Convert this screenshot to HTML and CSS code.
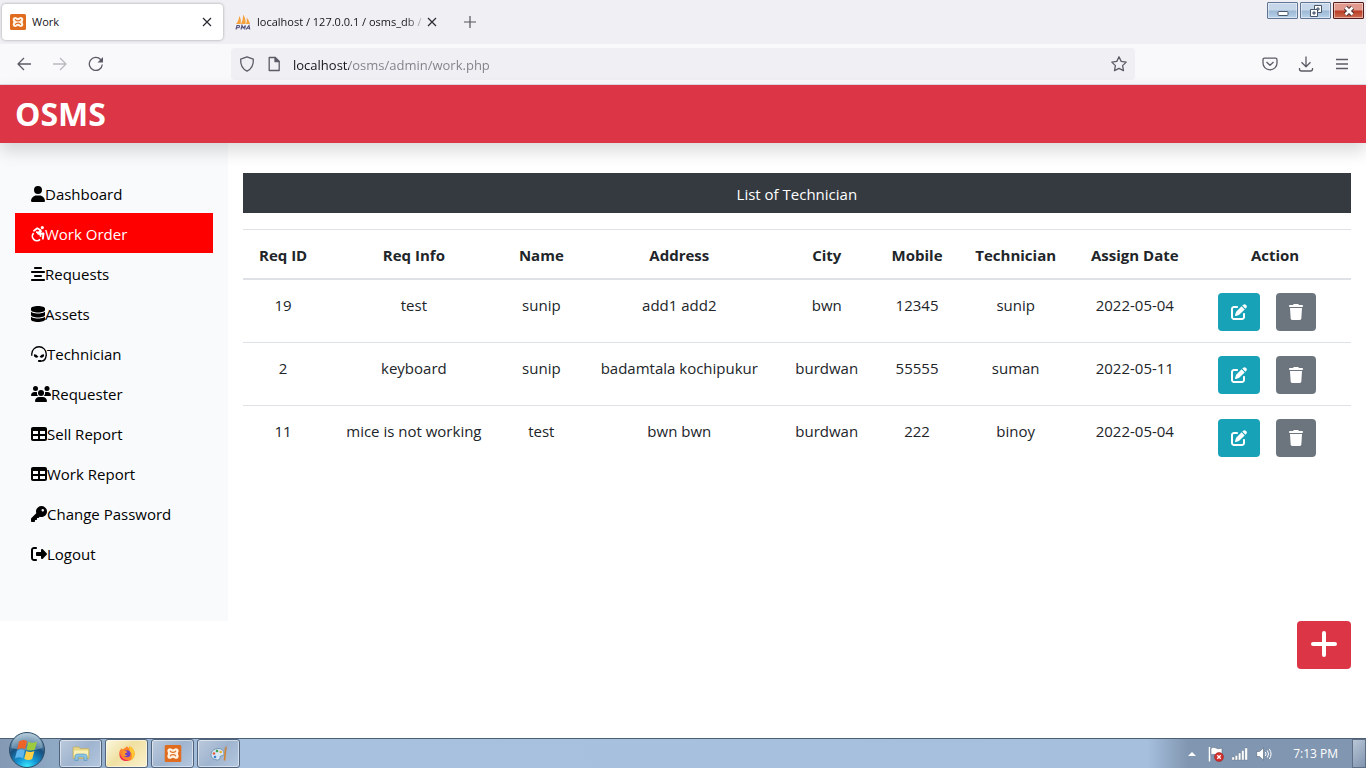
FILE: index.html
```html
<!DOCTYPE html>
<html lang="en">
<head>
<meta charset="utf-8">
<meta name="viewport" content="width=device-width, initial-scale=1">
<title>Work</title>
<link rel="stylesheet" href="styles.css">
</head>
<body>
<svg class="defs" width="0" height="0" aria-hidden="true">
  <defs>
    <symbol id="i-edit" viewBox="0 0 512 512"><path d="M471.6 21.7c-21.900-21.900-57.300-21.900-79.200 0L362.300 51.700l97.900 97.900 30.100-30.100c21.900-21.900 21.900-57.300 0-79.200L471.600 21.700zm-299.200 220c-6.100 6.100-10.800 13.600-13.500 21.900l-29.600 88.800c-2.900 8.600-.6 18.100 5.800 24.600s15.900 8.700 24.600 5.800l88.800-29.600c8.200-2.700 15.700-7.400 21.900-13.500L437.700 172.300 339.700 74.300 172.400 241.700zM96 64C43 64 0 107 0 160V416c0 53 43 96 96 96H352c53 0 96-43 96-96V320c0-17.700-14.300-32-32-32s-32 14.300-32 32v96c0 17.700-14.300 32-32 32H96c-17.700 0-32-14.300-32-32V160c0-17.700 14.300-32 32-32h96c17.700 0 32-14.300 32-32s-14.300-32-32-32H96z"/></symbol>
    <symbol id="i-trash" viewBox="0 0 448 512"><path d="M135.200 17.700L128 32H32C14.300 32 0 46.300 0 64S14.300 96 32 96H416c17.700 0 32-14.300 32-32s-14.300-32-32-32H320l-7.200-14.300C307.400 6.800 296.300 0 284.200 0H163.800c-12.100 0-23.200 6.800-28.600 17.700zM416 128H32L53.200 467c1.600 25.300 22.600 45 47.900 45H346.900c25.300 0 46.300-19.700 47.900-45L416 128z"/></symbol>
    <symbol id="i-table" viewBox="0 0 512 512"><path d="M64 256V160H224v96H64zm0 64H224v96H64V320zm224 96V320H448v96H288zM448 256H288V160H448v96zM64 32C28.700 32 0 60.700 0 96V416c0 35.300 28.700 64 64 64H448c35.300 0 64-28.700 64-64V96c0-35.300-28.700-64-64-64H64z"/></symbol>
    <symbol id="i-xampp" viewBox="0 0 16 16"><rect width="16" height="16" rx="1.500" fill="#e06c1f"/><path d="M5.300 3c1.200 0 1.400 1 2.700 1s1.500-1 2.700-1c1.600 0 2.600 1 2.600 2.500 0 1.100-.6 1.500-.6 2.500s.6 1.400.6 2.500c0 1.500-1 2.500-2.600 2.500-1.200 0-1.400-1-2.700-1s-1.500 1-2.700 1c-1.600 0-2.600-1-2.600-2.500 0-1.100.6-1.500.6-2.500s-.6-1.400-.6-2.500C2.700 4 3.700 3 5.300 3z" fill="#fff3e4"/><path d="M5.500 5.700c.3 1.200 1.300 1.200 2.500 1.200s2.200 0 2.500-1.200M5.500 10.300C5.800 9.100 6.800 9.100 8 9.100s2.200 0 2.500 1.200" fill="none" stroke="#e06c1f" stroke-width="1.200" stroke-linecap="round"/></symbol>
    <symbol id="i-close" viewBox="0 0 10 10"><path d="M1 1l8 8M9 1L1 9" fill="none" stroke="#2b2a33" stroke-width="1.200"/></symbol>
  </defs>
</svg>

<div class="browser">
  <div class="tabstrip">
    <div class="tab tab-active">
      <svg class="favicon" viewBox="0 0 16 16"><use href="#i-xampp"/></svg>
      <span class="tab-title">Work</span>
      <button class="tab-close" aria-label="Close tab"><svg width="10" height="10"><use href="#i-close"/></svg></button>
    </div>
    <div class="tab">
      <svg class="favicon" viewBox="0 0 16 16"><path d="M1 10C3 8 4 5 4.200 2c1.600 2 2 5 1.500 8zM6 10c1.600-3 2.200-6 2-9.500 2.200 3 2.800 6 2.600 9.500zM11 10c.8-2 1-4 .6-6.500 1.800 2 2.600 4 3.400 6.500z" fill="#f5a03a"/><path d="M1 15.500l1-4h1.600q1.200.1.900 1.200t-1.500 1.100H1.500M6 15.500l1-4 1.200 2.600 2.200-2.600-.8 4M11 15.500l3-4 .8 4M12 14.300h2.600" fill="none" stroke="#50507c" stroke-width="1.100"/></svg>
      <span class="tab-title tab-fade">localhost / 127.0.0.1 / osms_db /</span>
      <button class="tab-close" aria-label="Close tab"><svg width="10" height="10"><use href="#i-close"/></svg></button>
    </div>
    <button class="newtab" aria-label="New tab"><svg width="12" height="12" viewBox="0 0 12 12"><path d="M6 0v12M0 6h12" stroke="#55545d" stroke-width="1.200"/></svg></button>
    <div class="winbtns">
      <button class="winbtn" aria-label="Minimize"><svg width="16" height="14" viewBox="0 0 16 14"><rect x="3" y="7.500" width="10" height="4" rx="1" fill="#fff" stroke="#48566b"/></svg></button>
      <button class="winbtn" aria-label="Restore"><svg width="16" height="14" viewBox="0 0 16 14"><path d="M6.500 1.500h7v7h-7zM9 4h2v2H9z" fill="#fff" fill-rule="evenodd" stroke="#48566b"/><path d="M2.500 5.500h7v7h-7zM5 8h2v2H5z" fill="#fff" fill-rule="evenodd" stroke="#48566b"/></svg></button>
      <button class="winbtn winbtn-close" aria-label="Close"><svg width="16" height="14" viewBox="0 0 16 14"><path d="M4.500 3.500l7 7M11.500 3.500l-7 7" stroke="#4c3434" stroke-width="4.600"/><path d="M4.500 3.500l7 7M11.500 3.500l-7 7" stroke="#fff" stroke-width="2.600"/></svg></button>
    </div>
  </div>

  <div class="toolbar">
    <div class="tools-left">
      <button class="tool" aria-label="Back"><svg viewBox="0 0 16 16"><path d="M15 8H2M8 2L2 8l6 6"/></svg></button>
      <button class="tool tool-off" aria-label="Forward" disabled><svg viewBox="0 0 16 16"><path d="M1 8h13M8 2l6 6-6 6"/></svg></button>
      <button class="tool" aria-label="Reload"><svg viewBox="0 0 16 16"><path d="M14.300 8.500A6.500 6.500 0 1 1 12.600 3.500l1.500 1.500"/><path d="M15 1v5.500H9.500z" fill="#5b5b66" stroke="none"/></svg></button>
    </div>
    <div class="urlbar">
      <svg class="url-icon" viewBox="0 0 16 16"><path d="M8 .8l6.300 2.300c.4 5.200-1.500 9.600-6.300 12.100C3.200 12.700 1.300 8.300 1.700 3.100z"/></svg>
      <svg class="url-icon" viewBox="0 0 16 16"><path d="M3.200 1.500h6l4 4v9h-10z"/><path d="M9 1.500v4h4z" fill="#5b5b66"/></svg>
      <input class="url" type="text" aria-label="Address" value="localhost/osms/admin/work.php">
      <button class="tool" aria-label="Bookmark"><svg viewBox="0 0 16 16"><path d="M8 .8l2.200 4.600 5 .7-3.600 3.500.9 5L8 12.300l-4.500 2.300.9-5L.8 6.100l5-.7z"/></svg></button>
    </div>
    <div class="tools-right">
      <button class="tool" aria-label="Save to Pocket"><svg viewBox="0 0 16 16"><path d="M2.500 2.200h11q1.500 0 1.500 1.500v3.600a7 6.500 0 0 1-14 0V3.700q0-1.500 1.500-1.500zM4.500 6L8 9.300 11.500 6"/></svg></button>
      <button class="tool" aria-label="Downloads"><svg viewBox="0 0 16 16"><path d="M8 .5v10M3.500 6.300L8 10.800l4.500-4.500M1.500 12v1q0 2 2 2h9q2 0 2-2v-1"/></svg></button>
      <button class="tool" aria-label="Menu"><svg viewBox="0 0 16 16"><path d="M2 3.500h12M2 8h12M2 12.500h12"/></svg></button>
    </div>
  </div>
</div>

<div class="page">
  <header class="navbar"><a class="brand" href="#">OSMS</a></header>

  <div class="columns">
    <nav class="sidebar">
      <a class="nav-link" href="#"><svg class="fa" viewBox="0 0 448 512"><path d="M224 256A128 128 0 1 0 224 0a128 128 0 1 0 0 256zm-45.700 48C79.800 304 0 383.800 0 482.300C0 498.700 13.300 512 29.700 512H418.300c16.400 0 29.700-13.300 29.700-29.700C448 383.800 368.200 304 269.700 304H178.300z"/></svg>Dashboard</a>
      <a class="nav-link active" href="#"><svg class="fa" viewBox="0 0 448 512"><circle cx="362" cy="50" r="50"/><path d="M95 150l105-80 110 65-85 110" fill="none" stroke="currentColor" stroke-width="58" stroke-linejoin="round" stroke-linecap="round"/><path d="M290 125l65 45-80 95-75-20z"/><path d="M255 250l145-10-22 165" fill="none" stroke="currentColor" stroke-width="62" stroke-linejoin="round" stroke-linecap="round"/><path d="M85 228a142 142 0 1 0 205 200M160 200a142 142 0 0 1 150 145" fill="none" stroke="currentColor" stroke-width="56"/></svg>Work Order</a>
      <a class="nav-link" href="#"><svg class="fa" viewBox="0 0 448 512"><path d="M352 64c0-17.700-14.300-32-32-32H128c-17.700 0-32 14.300-32 32s14.300 32 32 32H320c17.700 0 32-14.300 32-32zm96 128c0-17.700-14.300-32-32-32H32c-17.700 0-32 14.300-32 32s14.300 32 32 32H416c17.700 0 32-14.300 32-32zM0 448c0 17.700 14.300 32 32 32H416c17.700 0 32-14.300 32-32s-14.300-32-32-32H32c-17.700 0-32 14.300-32 32zM352 320c0-17.700-14.300-32-32-32H128c-17.700 0-32 14.300-32 32s14.300 32 32 32H320c17.700 0 32-14.300 32-32z"/></svg>Requests</a>
      <a class="nav-link" href="#"><svg class="fa" viewBox="0 0 448 512"><path d="M448 80v48c0 44.200-100.300 80-224 80S0 172.200 0 128V80C0 35.800 100.300 0 224 0S448 35.800 448 80zM393.200 214.700c20.800-7.400 39.900-16.900 54.800-28.600V288c0 44.200-100.300 80-224 80S0 332.200 0 288V186.100c14.900 11.800 34 21.200 54.800 28.600C99.700 230.700 159.500 240 224 240s124.300-9.300 169.200-25.300zM0 346.100c14.900 11.800 34 21.200 54.800 28.600C99.700 390.700 159.500 400 224 400s124.300-9.300 169.200-25.300c20.800-7.400 39.900-16.900 54.800-28.600V432c0 44.200-100.300 80-224 80S0 476.200 0 432V346.100z"/></svg>Assets</a>
      <a class="nav-link" href="#"><svg class="fa fa-md" viewBox="0 0 512 512"><path d="M24 310V256a232 232 0 0 1 464 0v54M484 300c-4 100-60 182-164 182h-60" fill="none" stroke="currentColor" stroke-width="42"/><rect x="220" y="450" width="110" height="60" rx="30"/><path d="M104 262c50 0 90 25 132 80-40 45-105 40-132-5-15-25-15-60 0-75zM408 262c-50 0-90 25-132 80 40 45 105 40 132-5 15-25 15-60 0-75z"/></svg>Technician</a>
      <a class="nav-link" href="#"><svg class="fa fa-lg" viewBox="0 0 640 512"><circle cx="144" cy="80" r="80"/><circle cx="512" cy="80" r="80"/><circle cx="320" cy="224" r="96"/><path d="M0 298.700C0 239.800 47.800 192 106.700 192h42.700c15.900 0 31 3.500 44.600 9.700-13 75 12 105 41 118.300H21.300C9.600 320 0 310.400 0 298.700zM405 320c29-20 54-55 43-118.300 13-6 28-9.700 43-9.700h42.700C592.200 192 640 239.800 640 298.700c0 11.800-9.600 21.300-21.300 21.300zM128 485.300C128 411.700 187.700 352 261.300 352h117.300C452.300 352 512 411.700 512 485.300c0 14.700-11.900 26.700-26.700 26.700H154.700c-14.700 0-26.700-11.900-26.700-26.700z"/></svg>Requester</a>
      <a class="nav-link" href="#"><svg class="fa fa-md"><use href="#i-table"/></svg>Sell Report</a>
      <a class="nav-link" href="#"><svg class="fa fa-md"><use href="#i-table"/></svg>Work Report</a>
      <a class="nav-link" href="#"><svg class="fa fa-md" viewBox="0 0 512 512"><path d="M336 352c97.200 0 176-78.800 176-176S433.200 0 336 0S160 78.800 160 176c0 18.700 2.900 36.800 8.300 53.700L7 391c-4.500 4.500-7 10.600-7 17v80c0 13.300 10.700 24 24 24h80c13.300 0 24-10.700 24-24V448h40c13.300 0 24-10.700 24-24V384h40c6.400 0 12.500-2.500 17-7l33.300-33.300c16.900 5.400 35 8.300 53.700 8.300zM376 96a40 40 0 1 1 0 80 40 40 0 1 1 0-80z"/></svg>Change Password</a>
      <a class="nav-link" href="#"><svg class="fa fa-md" viewBox="0 0 512 512"><path d="M377.900 105.900L500.700 228.700c7.200 7.200 11.300 17.100 11.300 27.300s-4.100 20.100-11.300 27.300L377.900 406.100c-6.400 6.400-15 9.900-24 9.900c-18.700 0-33.900-15.200-33.900-33.900l0-62.100-128 0c-17.700 0-32-14.300-32-32l0-64c0-17.700 14.300-32 32-32l128 0 0-62.100c0-18.700 15.200-33.900 33.900-33.900c9 0 17.600 3.600 24 9.900zM160 96L96 96c-17.700 0-32 14.300-32 32l0 256c0 17.700 14.300 32 32 32l64 0c17.700 0 32 14.300 32 32s-14.300 32-32 32l-64 0c-53 0-96-43-96-96L0 128C0 75 43 32 96 32l64 0c17.700 0 32 14.300 32 32s-14.300 32-32 32z"/></svg>Logout</a>
    </nav>

    <main class="content">
      <p class="list-title">List of Technician</p>
      <table class="work-table">
        <colgroup><col class="c-id"><col class="c-info"><col class="c-name"><col class="c-address"><col class="c-city"><col class="c-mobile"><col class="c-tech"><col class="c-date"><col class="c-action"></colgroup>
        <thead>
          <tr><th scope="col">Req ID</th><th scope="col">Req Info</th><th scope="col">Name</th><th scope="col">Address</th><th scope="col">City</th><th scope="col">Mobile</th><th scope="col">Technician</th><th scope="col">Assign Date</th><th scope="col">Action</th></tr>
        </thead>
        <tbody>
          <tr><td>19</td><td>test</td><td>sunip</td><td>add1 add2</td><td>bwn</td><td>12345</td><td>sunip</td><td>2022-05-04</td>
            <td><div class="actions"><button class="btn btn-info" aria-label="Edit"><svg class="fa fa-md"><use href="#i-edit"/></svg></button><button class="btn btn-secondary" aria-label="Delete"><svg class="fa"><use href="#i-trash"/></svg></button></div></td></tr>
          <tr><td>2</td><td>keyboard</td><td>sunip</td><td>badamtala kochipukur</td><td>burdwan</td><td>55555</td><td>suman</td><td>2022-05-11</td>
            <td><div class="actions"><button class="btn btn-info" aria-label="Edit"><svg class="fa fa-md"><use href="#i-edit"/></svg></button><button class="btn btn-secondary" aria-label="Delete"><svg class="fa"><use href="#i-trash"/></svg></button></div></td></tr>
          <tr><td>11</td><td>mice is not working</td><td>test</td><td>bwn bwn</td><td>burdwan</td><td>222</td><td>binoy</td><td>2022-05-04</td>
            <td><div class="actions"><button class="btn btn-info" aria-label="Edit"><svg class="fa fa-md"><use href="#i-edit"/></svg></button><button class="btn btn-secondary" aria-label="Delete"><svg class="fa"><use href="#i-trash"/></svg></button></div></td></tr>
        </tbody>
      </table>
    </main>
  </div>

  <div class="add-row">
    <a class="btn btn-add" href="#" aria-label="Add work"><svg width="28" height="32" viewBox="0 0 28 32"><path d="M14 4v22M3 15h22" stroke="#fff" stroke-width="4" stroke-linecap="round"/></svg></a>
  </div>
</div>

<footer class="taskbar">
  <button class="orb" aria-label="Start"><svg width="38" height="36" viewBox="0 0 38 36">
    <defs><radialGradient id="orb" cx=".5" cy="1" r=".95"><stop offset="0" stop-color="#3ff0ff"/><stop offset=".3" stop-color="#159ad8"/><stop offset=".65" stop-color="#17507f"/><stop offset="1" stop-color="#8fb0c6"/></radialGradient></defs>
    <circle cx="19" cy="18" r="17.500" fill="url(#orb)" stroke="#2f4d66"/>
    <path d="M3.500 16a15.500 15 0 0 1 31 0q-15 5-31 0z" fill="#fff" opacity=".28"/>
    <path d="M11 9.500q4-2.800 8-.5l-1.800 8q-4-1.800-8 .5z" fill="#ee6428"/><path d="M20.300 9.700q4 2.200 8.700-.2l-2.200 8q-4 2-8.300 0z" fill="#9ccb3d"/><path d="M8.900 18.800q4-2.200 8-.3l-1.900 7.700q-4-1.900-8 .3z" fill="#5fb5ed"/><path d="M18.200 19.100q4 2 8.200 0l-2.200 7.800q-4 2.200-8-.2z" fill="#ffd044"/>
  </svg></button>
  <div class="apps">
    <button class="app" aria-label="Explorer"><svg viewBox="0 0 18 16"><path d="M1 2.500q0-1 1-1h5l1 1.500h8q1 0 1 1V13H1z" fill="#e9d684" stroke="#b5a560" stroke-width=".6"/><path d="M2 5h14v5H2z" fill="#fbf1b4"/><path d="M3 15v-4q0-2.500 2.500-2.500h7q2.500 0 2.500 2.500v4h-3v-3.500H6V15z" fill="#8cc5e6" stroke="#4d8eb5" stroke-width=".6"/></svg></button>
    <button class="app app-current" aria-label="Firefox"><svg viewBox="0 0 18 16"><path d="M9 .8q1 1.500 2.500 2 .1-.8-.3-2Q16.500 3 16.700 8.300q-.4 6.900-7.700 7.200-7.400-.5-7.700-7.300Q1.400 4.700 3.600 2.500q.1 1 .7 1.600Q6.200 3.500 9 .8z" fill="#ff842b"/><path d="M11.200.8Q16.500 3 16.700 8.300q-.4 4-3.700 6 2.500-5-1.500-9z" fill="#ffc832"/><path d="M1.700 6q.6 8.500 9.500 9.200Q4 17 1.700 11z" fill="#f02b58"/><circle cx="9" cy="8.300" r="3.500" fill="#7141c4"/><path d="M4.500 5.500q2-.7 5 1-.5 1-2.700 1.400Q7 10 9.500 10q-3.500 2-5-1z" fill="#ff9829"/></svg></button>
    <button class="app" aria-label="XAMPP"><svg viewBox="0 0 16 16"><use href="#i-xampp"/></svg></button>
    <button class="app" aria-label="Paint"><svg viewBox="0 0 18 16"><path d="M8 3q6 0 6 5.500 0 2-2.500 1.800-2 0-1.500 2 .2 2.200-2.500 2.200Q1 14 1 9 1.500 3.500 8 3z" fill="#d5e6f4" stroke="#678caa" stroke-width=".8"/><circle cx="4" cy="8" r="1.300" fill="#e25c3b"/><circle cx="7" cy="5.500" r="1.300" fill="#3da14a"/><circle cx="10.700" cy="6.500" r="1.300" fill="#eab12d"/><circle cx="5" cy="11.500" r="1.300" fill="#397fd0"/><path d="M15.500 4l-1 11" stroke="#d4822c" stroke-width="1.600"/><path d="M14.700 5q-.7-3 1.600-4.700Q17.500 3 16.500 5z" fill="#b98b5b"/></svg></button>
  </div>
  <div class="tray">
    <button class="tray-item" aria-label="Show hidden icons"><svg width="8" height="4" viewBox="0 0 8 4"><path d="M0 4l4-4 4 4z" fill="#fff"/></svg></button>
    <button class="tray-item" aria-label="Action Center"><svg width="16" height="16" viewBox="0 0 16 16"><path d="M1.500 1v14.500" stroke="#fff" stroke-width="1.500"/><path d="M3 2q3-1.500 5 0t6 0v7q-4 1.500-6 0t-5 0z" fill="#fff" stroke="#5c6d82" stroke-width=".6"/><circle cx="11" cy="11" r="4.500" fill="#d6302e" stroke="#8e1c1c" stroke-width=".5"/><path d="M9.300 9.300l3.400 3.400m0-3.400l-3.400 3.400" stroke="#fff" stroke-width="1.300"/></svg></button>
    <button class="tray-item" aria-label="Network"><svg width="16" height="14" viewBox="0 0 16 14"><path d="M0 10h2.400v3H0zM3.200 8.500h2.400V13H3.200zM6.400 6h2.400v7H6.400zM9.600 3.500H12V13H9.600zM12.800 1h2.700v12h-2.700z" fill="#fff" stroke="#536377" stroke-width=".3"/></svg></button>
    <button class="tray-item" aria-label="Volume"><svg width="16" height="14" viewBox="0 0 16 14"><path d="M.7 4.500h2.800L7.500.8v12.400l-4-3.700H.7z" fill="#fff" stroke="#536377" stroke-width=".6"/><path d="M9.300 5q1.500 2 0 4M11.300 3.500q2.500 3.500 0 7M13.300 2q3.500 5 0 10" fill="none" stroke="#fff"/></svg></button>
    <time class="clock">7:13 PM</time>
    <button class="show-desktop" aria-label="Show desktop"></button>
  </div>
</footer>
</body>
</html>
```
FILE: styles.css
```css
* { box-sizing: border-box; }

body {
  margin: 0;
  min-height: 100vh;
  display: flex;
  flex-direction: column;
  font-family: "Open Sans", "Noto Sans", sans-serif;
  font-size: 15px;
  line-height: 24px;
  color: #212529;
  background: #fff;
}

button { font: inherit; padding: 0; border: 0; background: none; }
a { text-decoration: none; }
.defs { display: block; height: 0; }

/* Browser window */
.browser { border-bottom: 1px solid #dcdce2; }

.tabstrip {
  display: flex;
  height: 44px;
  padding: 0 0 0 2px;
  gap: 4px;
  background: #f0eff4;
}

.tab {
  display: flex;
  align-items: center;
  width: 221px;
  height: 36px;
  margin-top: 4px;
  padding: 0 10px 0 8px;
  border-radius: 4px;
  font-size: 11px;
  color: #15141a;
}
.tab-active { background: #fff; box-shadow: 0 0 3px rgba(0, 0, 0, .35); }
.favicon { width: 16px; height: 16px; flex: none; margin-right: 6px; }
.tab-title { flex: 1; white-space: nowrap; }
.tab-fade {
  -webkit-mask-image: linear-gradient(to right, #000 88%, transparent);
  mask-image: linear-gradient(to right, #000 88%, transparent);
}
.tab-close { display: flex; padding: 1px; }

.newtab { display: flex; align-items: center; padding: 0 12px; }

.winbtns { display: flex; gap: 2px; margin: 2px 2px 0 auto; }
.winbtn {
  display: flex;
  align-items: center;
  justify-content: center;
  width: 31px;
  height: 17px;
  border: 1px solid #5f7593;
  border-radius: 1px;
  background: linear-gradient(#c6d7e9 48%, #9bb7d4 52%, #b9d2ea);
  box-shadow: inset 0 0 0 1px rgba(255, 255, 255, .45);
}
.winbtn-close {
  border-color: #561c1c;
  background: linear-gradient(#e0998c 48%, #b93a22 52%, #cf6d51);
}

.toolbar {
  display: flex;
  align-items: center;
  height: 40px;
  background: #f9f9fb;
}
.tools-left, .tools-right { display: flex; width: 231px; gap: 20px; }
.tools-left { padding-left: 16px; }
.tools-right { justify-content: flex-end; padding-right: 16px; }
.tool { display: flex; flex: none; }
.tool svg, .url-icon {
  width: 16px;
  height: 16px;
  fill: none;
  stroke: #5b5b66;
  stroke-width: 1.3;
  stroke-linejoin: round;
}
.tool-off { opacity: .4; }

.urlbar {
  flex: 1;
  display: flex;
  align-items: center;
  gap: 11px;
  height: 32px;
  padding: 0 8px;
  border-radius: 4px;
  background: #f0eff4;
}
.url {
  flex: 1;
  min-width: 0;
  padding: 1px 0 0;
  border: 0;
  outline: 0;
  font: 13px "Open Sans", "Noto Sans", sans-serif;
  color: transparent;
  background: linear-gradient(to right, #15141a 56px, #7f7f88 56px);
  -webkit-background-clip: text;
  background-clip: text;
}

/* OSMS page */
.page { flex: 1; }

.navbar {
  position: relative;
  display: flex;
  align-items: center;
  height: 58px;
  padding: 0 15px;
  background: #dc3545;
  box-shadow: 0 8px 16px rgba(0, 0, 0, .15);
}
.brand { font-size: 32px; font-weight: 700; color: #fff; }

.columns { display: flex; }

.sidebar {
  flex: 0 0 16.6667%;
  padding: 30px 15px 48px;
  background: #f8fafc;
}
.nav-link {
  display: flex;
  align-items: center;
  height: 40px;
  padding: 2px 16px 0;
  color: #000;
  white-space: nowrap;
}
.nav-link.active { background: #f00; color: #fff; }

.fa { flex: none; width: 14px; height: 16px; fill: currentColor; overflow: visible; }
.fa-md { width: 16px; }
.fa-lg { width: 20px; }

.content { flex: 1; min-width: 0; padding: 30px 15px 0; }

.list-title {
  margin: 0 0 16px;
  padding: 9px 8px 7px;
  background: #343a40;
  color: #fff;
  text-align: center;
}

.work-table {
  width: 100%;
  border-collapse: separate;
  border-spacing: 0;
  text-align: center;
}
.work-table th, .work-table td {
  padding: 13px 0 11px;
  border-top: 1px solid #dee2e6;
  vertical-align: top;
}
.work-table th { border-bottom: 2px solid #dee2e6; }
.work-table tbody tr:first-child td { border-top: 0; }

.c-id { width: 7.3%; }
.c-info { width: 16.3%; }
.c-name { width: 6.7%; }
.c-address { width: 18.2%; }
.c-city { width: 8.4%; }
.c-mobile { width: 7.9%; }
.c-tech { width: 9.9%; }
.c-date { width: 11.6%; }
.c-action { width: 13.7%; }

.actions { display: flex; justify-content: center; }
.btn {
  display: flex;
  align-items: center;
  justify-content: center;
  height: 38px;
  padding: 0 13px;
  margin-right: 16px;
  border-radius: 4px;
  color: #fff;
}
.btn-info { background: #17a2b8; }
.btn-secondary { background: #6c757d; }

.add-row { display: flex; justify-content: flex-end; padding: 0 15px; }
.btn-add { height: 48px; margin: 0; background: #dc3545; }

/* Desktop taskbar */
.taskbar {
  display: flex;
  align-items: stretch;
  height: 30px;
  border-top: 1px solid #4d5f75;
  background: linear-gradient(to right, #8499b3, #8ea7c3 50px, #a8c1df 240px, #a5bfdd 84%, #8196b0 87%);
}
.orb { align-self: flex-end; display: flex; margin-left: 8px; }
.apps { display: flex; gap: 3px; margin-left: 13px; }
.app {
  display: flex;
  align-items: center;
  justify-content: center;
  width: 43px;
  border: 1px solid #4f637d;
  border-radius: 3px;
  background: linear-gradient(135deg, #bccadc, #9fb4cf 50%, #b4c7df);
  box-shadow: inset 0 0 0 1px rgba(255, 255, 255, .5);
}
.app svg { width: 18px; height: 17px; }
.app-current { background: linear-gradient(135deg, #fcf8de, #efe0a2 45%, #fbf2ce); }

.tray { display: flex; align-items: center; gap: 8px; margin-left: auto; }
.tray-item { display: flex; }
.tray-item:first-child { margin-right: 4px; }
.clock { margin: 0 6px 0 13px; font-size: 12px; color: #fff; }
.show-desktop {
  width: 14px;
  align-self: stretch;
  border: 1px solid #5d6f87;
  background: linear-gradient(135deg, #b9c6d6, #8095af);
}
```
